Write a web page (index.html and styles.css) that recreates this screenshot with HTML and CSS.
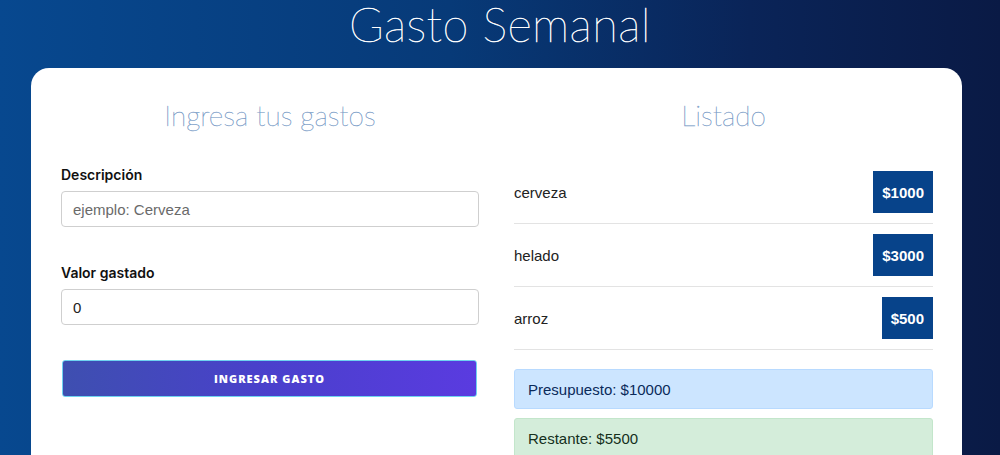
FILE: index.html
```html
<!DOCTYPE html>
<html lang="es">
<head>
<meta charset="utf-8">
<title>Gasto Semanal</title>
<link rel="stylesheet" href="styles.css">
</head>
<body>
<header class="top">
  <h1 class="title">Gasto Semanal</h1>
</header>
<main class="card">
  <section class="col">
    <h2 class="subtitle">Ingresa tus gastos</h2>
    <form class="form">
      <div class="field">
        <label class="label">Descripción</label>
        <input class="input" type="text" placeholder="ejemplo: Cerveza">
      </div>
      <div class="field">
        <label class="label">Valor gastado</label>
        <input class="input" type="text" value="0">
      </div>
      <button class="btn" type="button">Ingresar gasto</button>
    </form>
  </section>
  <section class="col">
    <h2 class="subtitle">Listado</h2>
    <ul class="list">
      <li class="item"><span>cerveza</span><span class="badge">$1000</span></li>
      <li class="item"><span>helado</span><span class="badge">$3000</span></li>
      <li class="item"><span>arroz</span><span class="badge">$500</span></li>
    </ul>
    <div class="alert alert-blue">Presupuesto: $10000</div>
    <div class="alert alert-green">Restante: $5500</div>
  </section>
</main>
</body>
</html>
```

FILE: styles.css
```css
* { box-sizing: border-box; }
html, body { height: 100%; }
body {
  margin: 0;
  background: linear-gradient(to right, #07488f 0%, #073a78 45%, #0a2458 75%, #0a1a45 100%);
  font-family: "Liberation Sans", Arial, sans-serif;
  overflow: hidden;
}
.top {
  height: 68px;
  display: flex;
  justify-content: center;
}
.title {
  margin: 0;
  font-family: Lato, "Open Sans", sans-serif;
  font-weight: 100;
  font-size: 47px;
  line-height: 48px;
  color: #ffffff;
  letter-spacing: 0.4px;
  -webkit-text-stroke: 0.5px #ffffff;
}
.card {
  margin-left: 31px;
  width: 931px;
  min-height: 387px;
  background: #ffffff;
  border-radius: 18px 18px 0 0;
  padding: 27px 29px 0 30px;
  display: grid;
  grid-template-columns: 418px 419px;
  column-gap: 35px;
}
.col { display: flex; flex-direction: column; }
.subtitle {
  margin: 0 0 31px;
  text-align: center;
  font-family: Lato, "Open Sans", sans-serif;
  font-weight: 100;
  font-size: 28px;
  line-height: 40px;
  color: #7c9ec8;
  -webkit-text-stroke: 0.35px #7c9ec8;
}
.form { display: flex; flex-direction: column; }
.field { display: flex; flex-direction: column; margin-bottom: 37px; }
.label {
  font-family: Inter, "Open Sans", sans-serif;
  font-weight: 600;
  font-size: 14px;
  line-height: 18px;
  color: #111111;
  margin-bottom: 7px;
}
.input {
  height: 36px;
  border: 1px solid #cfcfcf;
  border-radius: 4px;
  padding: 0 11px;
  font-family: "Liberation Sans", Arial, sans-serif;
  font-size: 15px;
  color: #222;
  background: #fff;
}
.input::placeholder { color: #6a6a6a; }
.btn {
  margin: -2px 2px 0 1px;
  height: 37px;
  border: 1px solid #6fd3f0;
  border-radius: 3px;
  background: linear-gradient(to right, #3e4fb0 0%, #4a40cc 50%, #5a3be0 100%);
  color: #ffffff;
  font-family: "Open Sans", sans-serif;
  font-weight: 800;
  font-size: 11px;
  letter-spacing: 1px;
  text-transform: uppercase;
}
.list { list-style: none; margin: -5px 0 0; padding: 0; }
.item {
  display: flex;
  justify-content: space-between;
  align-items: center;
  height: 63px;
  border-bottom: 1px solid #e3e3e3;
  font-size: 15px;
  color: #222;
}
.badge {
  background: #07438a;
  color: #ffffff;
  font-weight: 700;
  font-size: 15px;
  height: 42px;
  display: flex;
  align-items: center;
  padding: 0 9px;
}
.alert {
  height: 40px;
  border-radius: 3px;
  padding: 0 13px;
  display: flex;
  align-items: center;
  font-size: 15px;
}
.alert-blue {
  margin-top: 19px;
  background: #cce5ff;
  border: 1px solid #b8daff;
  color: #0a2a5a;
}
.alert-green {
  margin-top: 9px;
  background: #d4edda;
  border: 1px solid #c3e6cb;
  color: #15301c;
}
```
